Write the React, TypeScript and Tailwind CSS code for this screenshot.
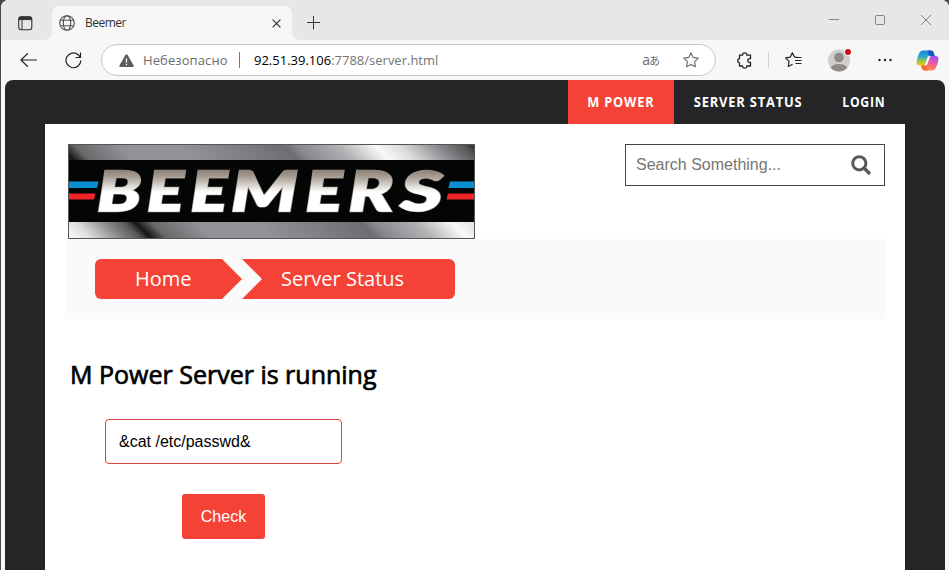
import React from "react";

const ui = "font-['Open_Sans','Noto_Sans',sans-serif]";
const arial = "font-['Liberation_Sans',Arial,sans-serif]";

function TabStrip() {
  return (
    <div className="flex h-10 shrink-0 bg-[linear-gradient(#e7e7e7_50%,#f7f7f7_50%)]">
      <div className="flex w-[51px] items-center rounded-br-lg bg-[#e7e7e7] pl-[17px] pt-1.5">
        <svg width="15" height="15" viewBox="0 0 15 15" fill="none" stroke="#333">
          <rect x="0.7" y="0.7" width="13.1" height="13.1" rx="2.5" strokeWidth="1.1" />
          <path d="M1 3.2V2.7Q1 1 2.7 1H12Q13.6 1 13.6 2.7V3.6H1Z" fill="#333" />
          <path d="M4 4v9.6" />
        </svg>
      </div>
      <div className="mt-1.5 flex h-[34px] w-[240px] items-center rounded-t-lg bg-[#f7f7f7] pl-[7px] pr-[11px]">
        <svg width="16" height="16" viewBox="0 0 16 16" fill="none" stroke="#505050" strokeWidth="1.1">
          <circle cx="8" cy="8" r="7.3" />
          <ellipse cx="8" cy="8" rx="3.7" ry="7.3" />
          <path d="M1.4 5.2h13.2M1.4 10.8h13.2" />
        </svg>
        <span className={`${ui} ml-2.5 text-[12px] leading-4 tracking-[-0.5px] text-[#333]`}>Beemer</span>
        <svg className="ml-auto" width="9" height="9" viewBox="0 0 9 9" stroke="#333" strokeWidth="1.2">
          <path d="M0.6 0.6l7.8 7.8M8.4 0.6L0.6 8.4" />
        </svg>
      </div>
      <div className="flex flex-1 rounded-bl-lg bg-[#e7e7e7]">
        <svg className="ml-[15px] mt-4" width="14" height="14" viewBox="0 0 14 14" stroke="#333" strokeWidth="1">
          <path d="M0 6.5h13M6.500 0v13.5" />
        </svg>
        <svg className="ml-auto mr-[17px] mt-3.5" width="103" height="12" viewBox="0 0 103 12" fill="none" stroke="#858585">
          <path d="M0 5.5h10" />
          <rect x="46.5" y="1.5" width="9" height="9" rx="0.7" />
          <path d="M92 1l10 10M102 1l-10 10" />
        </svg>
      </div>
    </div>
  );
}

function Copilot() {
  return (
    <svg width="23" height="21" viewBox="0 0 23 21">
      <defs>
        <linearGradient id="cpl" x1="0" y1="0" x2="0" y2="1">
          <stop offset="0" stopColor="#1586dc" />
          <stop offset="0.4" stopColor="#29a9cd" />
          <stop offset="0.7" stopColor="#9cc63f" />
          <stop offset="1" stopColor="#f4c51b" />
        </linearGradient>
        <linearGradient id="cpr" x1="0.6" y1="0" x2="0.3" y2="1">
          <stop offset="0" stopColor="#a94ff0" />
          <stop offset="0.5" stopColor="#ed6090" />
          <stop offset="1" stopColor="#ff963f" />
        </linearGradient>
      </defs>
      <path d="M7 0.5h8q2 0 2.7 2.2l1 3.3h-3.6q-2 0-2.7 2l-2 6Q9.700 15.500 8 15.500H3.500Q0 15.500 0.600 11.500Q1.500 6 3.500 2.500Q4.700 0.500 7 0.500Z" fill="url(#cpl)" />
      <path d="M11.500 0.500H15q2 0 2.700 2.200l1 3.300h-4q-1.500 0-2.200-2Q12 1.500 11.500 0.500Z" fill="#1457c0" />
      <path d="M16 20.500H9q-2.500 0-3.200-2.300L5 15.500h3q2 0 2.700-2l2-6Q13.300 6 15 6h4.500Q23 6 22.400 9.500Q21.500 15 19.500 18.500Q18.300 20.500 16 20.500Z" fill="url(#cpr)" />
      <path d="M5 15.500h3.500q1.500 0 2 2t1.300 3H9q-2.500 0-3.200-2.300Z" fill="#f26d32" />
      <path d="M11.700 6.600Q12.500 6 14.500 6L11.200 14.500Q10.500 15.500 8.700 15.500Z" fill="#f7f7f7" />
    </svg>
  );
}

function Toolbar() {
  return (
    <div className="flex h-10 shrink-0 items-center bg-[#f7f7f7] pl-[19px] pr-2.5">
      <svg width="17" height="15" viewBox="0 0 17 15" fill="none" stroke="#222" strokeWidth="1.2">
        <path d="M17 7H1M7.800 0.300L1 7L7.800 13.700" />
      </svg>
      <svg className="ml-7" width="17" height="17" viewBox="0 0 17 17" fill="none" stroke="#222" strokeWidth="1.2">
        <path d="M15.800 8.500A7.400 7.400 0 1 1 13.200 2.700L15.400 5.400M15.500 0.500V5.500H10.500" />
      </svg>
      <div className="ml-[19px] flex h-8 w-[615px] items-center rounded-full border border-[#c9c9c9] bg-white pl-[17px] pr-4">
        <svg width="15" height="13" viewBox="0 0 15 13">
          <path d="M7.500 0.300Q8.200 0.300 8.600 1L14.600 11.500Q15 12.800 13.800 12.900H1.200Q0 12.800 0.400 11.500L6.400 1Q6.800 0.300 7.500 0.300Z" fill="#5c5c5c" />
          <path d="M7.500 4.500v4M7.500 9.800v1.500" stroke="#fff" strokeWidth="1.300" />
        </svg>
        <span className={`${ui} ml-[9px] w-[85px] whitespace-nowrap text-[13px] leading-5 tracking-[0.100px] text-[#6c6c6c]`}>Небезопасно</span>
        <span className="ml-[11px] h-4 w-px bg-[#777]" />
        <span className={`${ui} ml-3.5 whitespace-nowrap text-[13px] leading-5 text-[#757575]`}>
          <span className="text-black">92.51.39.106</span>:7788/server.html
        </span>
        <span className="ml-auto flex items-baseline font-['Open_Sans','Noto_Sans_CJK_JP',sans-serif] leading-5 text-[#6c6c6c]">
          <span className="text-[14px]">a</span>
          <span className="-ml-px text-[11px]">あ</span>
        </span>
        <svg className="ml-[23px]" width="16" height="16" viewBox="0 0 16 16" fill="none" stroke="#6c6c6c" strokeWidth="1.100" strokeLinejoin="round">
          <path d="M8 0.800L10.200 5.400L15.300 6.100L11.600 9.700L12.500 14.800L8 12.400L3.500 14.800L4.400 9.700L0.700 6.100L5.800 5.400Z" />
        </svg>
      </div>
      <svg className="ml-[21px]" width="16" height="17" viewBox="0 0 16 17" fill="none" stroke="#222" strokeWidth="1.300" strokeLinejoin="round">
        <path d="M2.500 3.200H5.600Q5.500 0.800 7.700 0.800T9.800 3.200H13.500V6.700Q10.800 6.300 10.800 8.500T13.500 10.500V14H9.800Q9.900 16.200 7.700 16.200T5.600 14H2.500V10.800Q0.700 10.600 0.700 8.700T2.500 6.600Z" />
      </svg>
      <span className="ml-[15px] h-4 w-px bg-[#cfcfcf]" />
      <svg className="ml-4" width="17" height="16" viewBox="0 0 17 16" fill="none" stroke="#222" strokeWidth="1.200" strokeLinejoin="round">
        <path d="M12.500 5.300L9.500 5L7.300 0.800L5.200 5.200L0.700 5.900L4 9.300L3.300 14.500L7.600 12.200M9.500 5.500H16.500M10 8.500H16.500M10.500 11.500H16.500" />
      </svg>
      <svg className="ml-[25px]" width="25" height="24" viewBox="0 0 25 24">
        <defs>
          <clipPath id="avatar"><circle cx="12" cy="12.500" r="11" /></clipPath>
        </defs>
        <g clipPath="url(#avatar)">
          <rect width="25" height="25" fill="#d0cecc" />
          <circle cx="12" cy="9.500" r="4.800" fill="#8d8a88" />
          <ellipse cx="12" cy="21" rx="8.500" ry="5" fill="#8d8a88" />
        </g>
        <circle cx="21" cy="4" r="3.700" fill="#f7f7f7" />
        <circle cx="21" cy="4" r="3" fill="#d0101c" />
      </svg>
      <svg className="ml-[26px]" width="14" height="4" viewBox="0 0 14 4" fill="#222">
        <circle cx="1.500" cy="2" r="1.200" /><circle cx="7" cy="2" r="1.200" /><circle cx="12.500" cy="2" r="1.200" />
      </svg>
      <div className="ml-auto"><Copilot /></div>
    </div>
  );
}

const letters = [
  { glyph: "B", x: 29, stretch: "scale(1.28 1)" },
  { glyph: "E", x: 79, stretch: "scale(1.22 1)" },
  { glyph: "E", x: 122.5, stretch: "scale(1.22 1)" },
  { glyph: "M", x: 163, stretch: "scale(1.34 1)" },
  { glyph: "E", x: 237.5, stretch: "scale(1.22 1)" },
  { glyph: "R", x: 280.5, stretch: "scale(1.32 1)" },
  { glyph: "S", x: 332.5, stretch: "scale(1.45 1)" },
];

const chrome: [number, string][] = [
  [0, "#fff"], [0.05, "#dcdcdc"], [0.1, "#929294"], [0.145, "#5a5a5b"], [0.167, "#151515"],
  [0.2, "#68686a"], [0.29, "#929397"], [0.4, "#939499"], [0.615, "#6d6e72"], [0.64, "#87888c"],
  [0.727, "#b2b3b5"], [0.797, "#f8f8f8"], [0.847, "#dcdcdd"], [0.926, "#858689"], [0.976, "#555"], [1, "#222"],
];

function Logo() {
  return (
    <svg className="ml-[3px] block" width="407" height="95" viewBox="0 0 407 95">
      <defs>
        <linearGradient id="chrome" gradientUnits="userSpaceOnUse" x1="-47.5" y1="47.5" x2="203.5" y2="-203.5">
          {chrome.map(([offset, color]) => (
            <stop key={offset} offset={offset} stopColor={color} />
          ))}
        </linearGradient>
        <linearGradient id="lettering" gradientUnits="userSpaceOnUse" x1="0" y1="-42" x2="0" y2="0">
          <stop offset="0" stopColor="#857a70" />
          <stop offset="0.2" stopColor="#aaa197" />
          <stop offset="0.55" stopColor="#fff" />
          <stop offset="1" stopColor="#fff" />
        </linearGradient>
      </defs>
      <rect width="407" height="95" fill="url(#chrome)" />
      <rect y="16" width="407" height="62" fill="#040605" />
      <path d="M0 37.500H30.500L29 44H0ZM382 37.500H407V44H380.500Z" fill="#0890d3" />
      <path d="M0 49.500H27.500L26 55.500H0ZM380 49.500H407V55.500H378.500Z" fill="#ee2529" />
      <g className="font-['Lato',sans-serif] text-[56px] font-black italic">
        {letters.map(({ glyph, x, stretch }) => (
          <g key={x} transform={`translate(${x} 67) ${stretch}`}>
            <text fill="#9b8f80" stroke="#9b8f80" strokeWidth="2.400">{glyph}</text>
            <text fill="url(#lettering)" stroke="url(#lettering)" strokeWidth="1.300">{glyph}</text>
          </g>
        ))}
      </g>
      <rect x="0.500" y="0.500" width="406" height="94" fill="none" stroke="#555" />
    </svg>
  );
}

function Site() {
  return (
    <div className="mx-1 flex flex-1 flex-col rounded-t-lg bg-[#252527] px-10">
      <nav className="flex h-11 shrink-0 justify-end whitespace-nowrap font-['Open_Sans',sans-serif] text-[14px] font-bold tracking-[0.900px] text-white">
        <a className="flex w-[106px] items-center justify-center bg-[#f44336] pb-px"><span className="scale-x-[0.91]">M POWER</span></a>
        <a className="flex w-[149px] items-center justify-center pb-px"><span className="scale-x-[0.92]">SERVER STATUS</span></a>
        <a className="flex w-[82px] items-center justify-center pb-px"><span className="scale-x-[0.87]">LOGIN</span></a>
      </nav>
      <main className="flex-1 bg-white px-5 pt-5">
        <header className="flex items-start justify-between">
          <Logo />
          <div className="flex h-[42px] w-[260px] items-center justify-between border border-[#444] pl-2.5 pr-[13px]">
            <span className={`${arial} text-[16px] text-[#757575]`}>Search Something...</span>
            <svg width="20" height="20" viewBox="0 0 20 20" fill="none" stroke="#5a5858">
              <circle cx="8.300" cy="8.300" r="6.600" strokeWidth="3" />
              <path d="M13 13l5 5" strokeWidth="3.400" strokeLinecap="round" />
            </svg>
          </div>
        </header>
        <div className="flex h-20 items-center bg-[#fafafa] pl-[30px] font-['Open_Sans',sans-serif] text-[20px] text-white">
          <a className="flex h-10 w-[147px] items-center rounded-l-md bg-[#f44336] pl-10 [clip-path:polygon(0_0,127px_0,147px_50%,127px_100%,0_100%)]">Home</a>
          <a className="flex h-10 w-[213px] items-center rounded-r-md bg-[#f44336] pl-[39px] [clip-path:polygon(0_0,100%_0,100%_100%,0_100%,20px_50%)]">Server Status</a>
        </div>
        <h2 className="ml-[5px] mt-[37px] whitespace-nowrap font-['Open_Sans',sans-serif] text-[25px] leading-9 text-black [-webkit-text-stroke:0.700px_black]">M Power Server is running</h2>
        <div className={`${arial} ml-10 mt-[27px] flex w-[237px] flex-col items-center text-[16px]`}>
          <div className="flex h-[45px] w-full items-center rounded border border-[#d3483f] pl-[13px] text-black">&amp;cat /etc/passwd&amp;</div>
          <button className="mt-[30px] h-[45px] w-[83px] rounded-[3px] bg-[#f44336] text-white">Check</button>
        </div>
      </main>
    </div>
  );
}

export default function App() {
  return (
    <div className="h-[570px] w-[949px] overflow-hidden bg-[#4a4a4a] pl-px">
      <div className="flex h-full flex-col overflow-hidden rounded-t-lg bg-[#f7f7f7]">
        <TabStrip />
        <Toolbar />
        <Site />
      </div>
    </div>
  );
}
